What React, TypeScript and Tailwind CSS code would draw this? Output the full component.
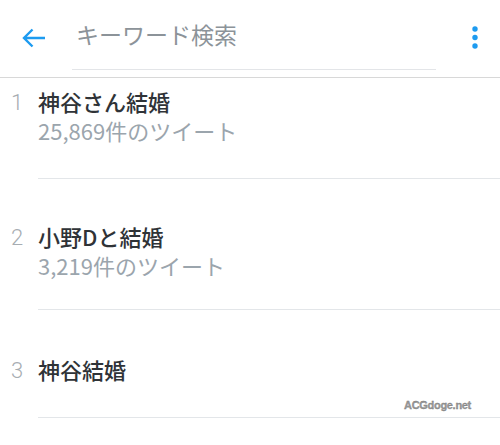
import React from "react";

type Trend = {
  rank: number;
  title: string;
  count?: string;
  pt: string;
  numPt: string;
  pb: string;
};

const trends: Trend[] = [
  { rank: 1, title: "神谷さん結婚", count: "25,869件のツイート", pt: "pt-[9px]", numPt: "pt-[11px]", pb: "pb-[34px]" },
  { rank: 2, title: "小野Dと結婚", count: "3,219件のツイート", pt: "pt-[43px]", numPt: "pt-[45px]", pb: "pb-[30px]" },
  { rank: 3, title: "神谷結婚", pt: "pt-[45px]", numPt: "pt-[47px]", pb: "pb-[34px]" },
];

const jp = { fontFamily: '"Noto Sans CJK JP", "Noto Sans", sans-serif' };

const TrendRow = ({ t }: { t: Trend }) => (
  <div className="flex">
    <div
      className={`w-[38px] shrink-0 pl-[11px] ${t.numPt} text-[22px] leading-[28px] font-light text-[#a7adb2]`}
      style={{ fontFamily: 'Roboto, "Noto Sans", sans-serif' }}
    >
      {t.rank}
    </div>
    <div className={`flex-1 border-b border-[#e3e6e9] ${t.pt} ${t.pb}`} style={jp}>
      <div className="text-[22px] leading-[28px] font-medium text-[#2f3337]">{t.title}</div>
      {t.count && (
        <div className="pt-[1px] text-[22px] leading-[28px] text-[#9ba5ad]">{t.count}</div>
      )}
    </div>
  </div>
);

export default function App() {
  return (
    <div className="relative w-[500px] h-[445px] bg-white overflow-hidden">
      <div className="flex h-[78px] border-b border-[#d8d8d8]">
        <svg className="ml-[22px] mt-[26px]" width="24" height="24" viewBox="0 0 24 24" fill="none">
          <path d="M23 12H2.5M10.5 3.5L2 12l8.5 8.5" stroke="#1d9bf0" strokeWidth="2.4" />
        </svg>
        <div
          className="ml-[26px] mt-[22px] w-[364px] h-[48px] border-b border-[#e3e5e8] pl-[4px] text-[23px] leading-[24px] text-[#8c9399]"
          style={jp}
        >
          キーワード検索
        </div>
        <svg className="ml-auto mr-[21px] mt-[26px]" width="8" height="24" viewBox="0 0 8 24">
          <circle cx="4" cy="3" r="2.7" fill="#1d9bf0" />
          <circle cx="4" cy="11.5" r="2.7" fill="#1d9bf0" />
          <circle cx="4" cy="20" r="2.7" fill="#1d9bf0" />
        </svg>
      </div>

      {trends.map((t) => (
        <TrendRow key={t.rank} t={t} />
      ))}

      <div
        className="absolute left-[404px] top-[397px] text-[11px] font-bold text-[#9a9a9a] tracking-[-0.3px]"
        style={{ fontFamily: '"Liberation Sans", Arial, sans-serif', WebkitTextStroke: "0.3px #777" }}
      >
        ACGdoge.net
      </div>
    </div>
  );
}
